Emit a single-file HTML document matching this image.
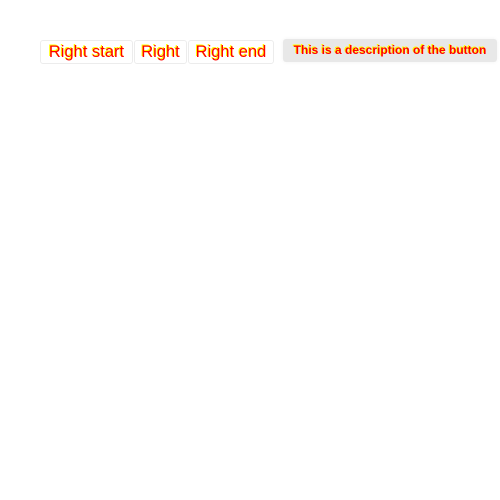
<!DOCTYPE html>
<html><head><style>
html,body{margin:0;background:#fff;width:500px;height:500px;overflow:hidden;font-family:"Liberation Sans",sans-serif}
.b{position:absolute;top:40px;height:22px;border:1px solid #ececec;border-radius:3px;background:#fff;box-sizing:content-box;color:#f00;font-size:16.5px;line-height:23px;text-align:center;text-shadow:-1px -1px 0 #ff0;white-space:nowrap}
.t{position:absolute;left:283px;top:39px;width:214px;height:23px;background:#e8e8e8;border-radius:3px;color:#f00;font-size:12px;font-weight:bold;line-height:22px;text-align:center;text-shadow:-1px -1px 0 #ff0;box-shadow:0 0 4px rgba(0,0,0,0.05);white-space:nowrap}
</style></head><body>
<div class="b" style="left:40px;width:91px">Right start</div>
<div class="b" style="left:134px;width:51px">Right</div>
<div class="b" style="left:188px;width:84px">Right end</div>
<div class="t">This is a description of the button</div>
</body></html>
